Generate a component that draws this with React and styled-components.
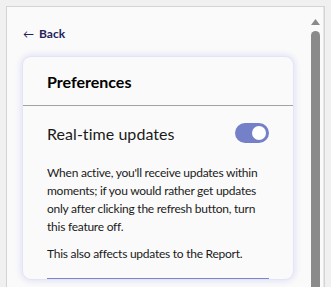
import React, { useState } from "react";
import styled, { createGlobalStyle } from "styled-components";

const GlobalStyle = createGlobalStyle`
  html, body {
    margin: 0;
    padding: 0;
    background: #f0f0f0;
    overflow: hidden;
  }
  body {
    font-family: Lato, "Liberation Sans", sans-serif;
    color: #111;
  }
`;

const Frame = styled.div`
  margin: 6px 6px 0 6px;
  height: 290px;
  border: 1px solid #d4d4d4;
  border-bottom: none;
  background: #fafafa;
  display: flex;
`;

const Content = styled.div`
  flex: 1;
  padding: 18px 15px 0 16px;
  min-width: 0;
`;

const BackLink = styled.a`
  display: flex;
  align-items: center;
  gap: 5px;
  height: 16px;
  font-size: 12px;
  font-weight: 700;
  color: #23235a;
  text-decoration: none;
  cursor: pointer;
`;

const Arrow = styled.span`
  font-size: 11px;
  font-weight: 400;
`;

const Card = styled.section`
  margin-top: 16px;
  background: #fafafa;
  border-radius: 8px;
  box-shadow: 0 0 0 1px #e2e5f7, 0 0 6px 2px #dde0f5;
`;

const CardHeader = styled.h2`
  margin: 0;
  height: 48px;
  padding: 0 24px;
  display: flex;
  align-items: center;
  font-size: 16px;
  font-weight: 700;
  color: #000;
  border-bottom: 1px solid #a3a3a3;
`;

const CardBody = styled.div`
  padding: 17px 24px 0 24px;
`;

const SettingRow = styled.div`
  display: flex;
  align-items: center;
  justify-content: space-between;
  height: 20px;
`;

const SettingLabel = styled.span`
  font-size: 16px;
  letter-spacing: 0.05px;
  color: #1a1a1a;
`;

const Toggle = styled.button`
  width: 34px;
  height: 20px;
  border-radius: 10px;
  border: none;
  padding: 0;
  background: ${(p) => (p.$on ? "#7480c8" : "#b9b9b9")};
  position: relative;
  cursor: pointer;

  &::after {
    content: "";
    position: absolute;
    top: 3px;
    left: ${(p) => (p.$on ? "17px" : "3px")};
    width: 14px;
    height: 14px;
    border-radius: 50%;
    background: #fff;
  }
`;

const Description = styled.p`
  margin: ${(p) => (p.$first ? "21px" : "9px")} 0 0 0;
  font-size: 12px;
  line-height: 18px;
  letter-spacing: -0.25px;
  color: #1a1a1a;
`;

const Rule = styled.hr`
  margin: 15px 0 0 0;
  border: none;
  border-top: 1px solid #7a86d0;
`;

const Scrollbar = styled.div`
  width: 15px;
  flex-shrink: 0;
  display: flex;
  flex-direction: column;
  align-items: center;
  padding-top: 12px;
  gap: 6px;
  border-right: 1px solid #e6e6e6;
`;

const Thumb = styled.div`
  width: 9px;
  flex: 1;
  background: #8a8a8a;
  border-radius: 5px 5px 0 0;
`;

export default function App() {
  const [on, setOn] = useState(true);
  return (
    <>
      <GlobalStyle />
      <Frame>
        <Content>
          <BackLink>
            <Arrow>←</Arrow>Back
          </BackLink>
          <Card>
            <CardHeader>Preferences</CardHeader>
            <CardBody>
              <SettingRow>
                <SettingLabel>Real-time updates</SettingLabel>
                <Toggle $on={on} onClick={() => setOn(!on)} aria-label="Real-time updates" />
              </SettingRow>
              <Description $first>
                When active, you'll receive updates within moments; if you would
                rather get updates only after clicking the refresh button, turn
                this feature off.
              </Description>
              <Description>This also affects updates to the Report.</Description>
              <Rule />
            </CardBody>
          </Card>
        </Content>
        <Scrollbar>
          <svg width="9" height="6" viewBox="0 0 9 6">
            <polygon points="4.5,0 9,6 0,6" fill="#8a8a8a" />
          </svg>
          <Thumb />
        </Scrollbar>
      </Frame>
    </>
  );
}
